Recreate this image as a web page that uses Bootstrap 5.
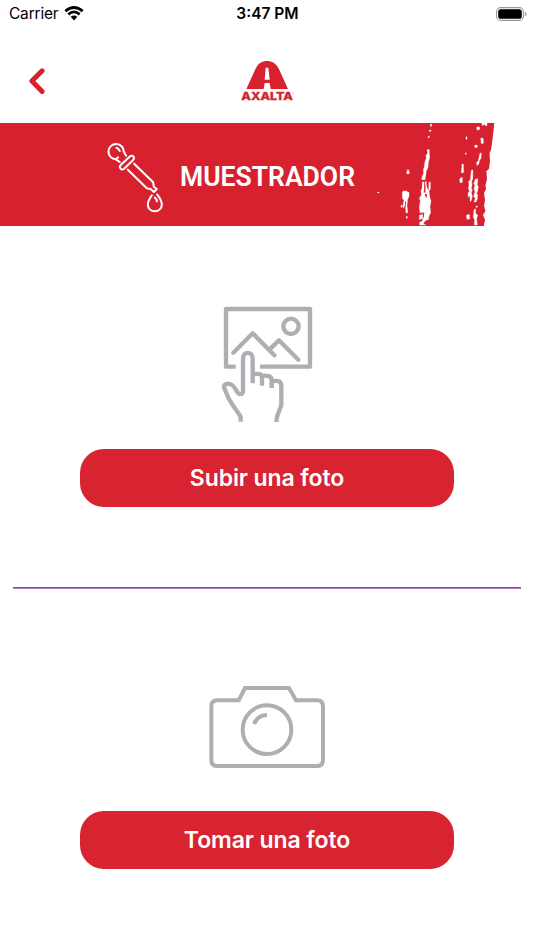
<!DOCTYPE html>
<html lang="es">
<head>
<meta charset="utf-8">
<meta name="viewport" content="width=device-width, initial-scale=1">
<title>Muestrador</title>
<link href="https://cdn.jsdelivr.net/npm/bootstrap@5.3.0/dist/css/bootstrap.min.css" rel="stylesheet">
<style>
body { font-family: Inter, "Liberation Sans", sans-serif; color: #000; }
svg { display: block; flex-shrink: 0; }
.screen { width: 534px; height: 950px; }
.status { height: 28px; padding: 0 7px 0 9px; font-size: 15.5px; line-height: 28px; }
.status > * { flex: 1 1 0; }
.status .carrier { letter-spacing: -.2px; }
.wifi { margin-left: 6px; margin-top: -1px; }
.status .clock { font-weight: 600; margin-left: -1px; }
.topbar { height: 95px; }
.back { width: 74px; padding: 0; border: 0; }
.logo { margin-top: 22px; }
.banner { height: 103px; }
.banner-title { color: #fff; font: 600 28px/34px Roboto, sans-serif; left: 180px; top: 36px; }
.upload { height: 361px; padding-top: 69px; }
.capture { height: 361px; padding-top: 86px; }
.action { width: 374px; height: 58px; border-radius: 24px; background: #d82330; color: #fff; font-weight: 600; font-size: 23px; letter-spacing: -.1px; padding: 0; --bs-btn-hover-bg: #bf1d29; --bs-btn-hover-color: #fff; }
.upload .action { margin-top: 19px; }
.capture .action { margin-top: 31px; }
.divider { height: 2px; margin: 0 13px; background: linear-gradient(#9140bd 50%, #b678d3 50%); }
</style>
</head>
<body class="bg-white">
<main class="screen d-flex flex-column overflow-hidden">
  <div class="status d-flex align-items-center">
    <div class="d-flex align-items-center">
      <span class="carrier">Carrier</span>
      <svg class="wifi" width="20" height="15" viewBox="0 0 18 14" fill="none" stroke="#000" stroke-width="2.5">
        <path d="M.9 4.8Q9-2 17.1 4.8M3.7 7.8Q9 3.3 14.3 7.8"/>
        <path d="M5.9 10.1Q9 7.5 12.1 10.1L9 13.5Z" fill="#000" stroke="none"/>
      </svg>
    </div>
    <div class="clock text-center">3:47 PM</div>
    <div class="d-flex justify-content-end">
      <svg width="31" height="14" viewBox="0 0 31 14">
        <rect x=".6" y=".6" width="26.8" height="12.8" rx="4" fill="#fff" stroke="#999" stroke-width="1.1"/>
        <rect x="2.2" y="2.2" width="23.6" height="9.6" rx="2.6"/>
        <path d="M28.8 4.8Q30.5 5.3 30.5 7T28.8 9.2Z" fill="#999"/>
      </svg>
    </div>
  </div>
  <header class="topbar d-flex justify-content-between">
    <button class="btn back d-flex justify-content-center pt-4" aria-label="Volver">
      <svg class="mt-3" width="16" height="27" viewBox="0 0 16 27" fill="none" stroke="#d7212f" stroke-width="5" stroke-linecap="round" stroke-linejoin="round"><path d="M13.1 2.8 2.9 13 13.1 23.4"/></svg>
    </button>
    <svg class="logo" width="74" height="60" viewBox="0 0 222 180" fill="#d7212f">
      <path fill-rule="evenodd" d="M49 117 76 58C84 39 97 33 111 33S138 39 147 58L174 117H122L119 99H104L101 117ZM107 53 104 89H119L115 53Z"/>
      <text x="34" y="151" font-family="Inter, sans-serif" font-weight="800" font-size="33" stroke="#d7212f" stroke-width="1" textLength="155" lengthAdjust="spacingAndGlyphs">AXALTA</text>
      <circle cx="189" cy="129" r="1.5"/>
    </svg>
    <span class="back"></span>
  </header>
  <section class="banner position-relative">
    <svg width="500" height="103" viewBox="0 0 500 103" aria-hidden="true">
      <path fill="#d7212f" d="M0 0H494.3L493 12 492 20 491 27 489.500 30 490 38 489 46 486.500 48 487 56 485.500 62 486 66 484 70 485 77 484 83 485.500 88 483 92 485 97 484 103H0Z"/>
      <g transform="translate(89.8 2) scale(.33333)" fill="none" stroke="#fff" stroke-width="6" stroke-linecap="round" stroke-linejoin="round">
        <path d="M102 80A23 23 0 1 0 78 103L85 97M78 103 90 111M102 80 109 92M80 68Q87 70 90 78"/>
        <path d="M92 121 121 94Q128 89 132 96 134 101 130 105L102 132Q96 136 92 130 88 126 92 121Z"/>
        <path d="M114 134 171 190 184 193 192 201M133 116 190 172 192 185 201 192 192 201"/>
        <path d="M186 211Q174 227 174 239A21 20 0 0 0 216 239Q216 226 202 208M195 218Q202 223 201 229"/>
      </g>
      <g transform="translate(370 -5) scale(.33333)" fill="#fff" stroke="#fff" stroke-width="1">
        <path d="M181 18h4v7h-4zM178 36h5v4h-5zM174 55h4v4h-4zM171 95H178V106L179 119 175 134 174 149 169 158 167 174 165 185H155L157 174 161 166 160 155 163 146 165 130 169 121 168 112 173 106Z"/>
        <path d="M157 192H162V210L161 224H167V206L165 191H169V204L176 220 177 192H181V214L177 218 179 237 183 250 180 266 182 284 177 294 176 304 164 309 160 318 168 321H149V313L157 309 159 300 148 305V292L159 289 158 282 150 285 148 268 151 250 148 241 154 232 153 216 156 213Z"/>
        <path fill="#d7212f" stroke="none" d="M164 228h6l1 10h-4zM159 284h4l-2 15h-3z"/>
        <path d="M112 155h4v5h2v7h-8v-6h2zM97 222 102 218 106 220 110 218 112 222 117 223V235L113 244 111 263 113 278 112 285H108L107 270 109 252 105 248V261L101 270 98 267 102 247 97 241ZM93 262h3v6h-3zM109 295h3v6h-3zM23 222h4v3h-4z"/>
        <path d="M335 14H351V23H346L343 18 337 23ZM320 28 328 26 330 34 321 36ZM332 61 339 60 341 75 334 77ZM288 56h3v8h-3zM314 82 321 81 323 87 315 89ZM330 105 334 106 333 121 328 128 327 137 321 143 320 133 325 128ZM286 105h3v4h-3zM276 138 280 138 281 164H274L275 153ZM269 182 277 178 277 193 270 194ZM304 157 309 156 308 184 305 190 306 200 304 211 307 216 304 224 307 235 303 250 300 249V233L295 238 294 225 299 219 295 212 297 201 296 189 301 187ZM316 184 323 182 323 195 321 198 325 207 322 223 318 225 323 230 322 243 318 252H312L316 241 311 235 315 222 312 211 315 202 311 197ZM318 264h4v4h-4zM289 292 298 289 299 303 291 304ZM312 275 317 272 317 286 323 292 320 302 322 321H313L314 306 310 298ZM343 315h6v5h-6z"/>
      </g>
    </svg>
    <h1 class="banner-title position-absolute m-0">
      <svg width="200" height="34" viewBox="0 0 200 34"><text x="0" y="26.5" fill="#fff" textLength="175" lengthAdjust="spacingAndGlyphs">MUESTRADOR</text></svg>
    </h1>
  </section>
  <section class="upload d-flex flex-column align-items-center">
    <svg width="115" height="135" viewBox="0 0 345 405" fill="none" stroke="#aeafb3" stroke-width="13" stroke-linejoin="round" aria-hidden="true">
      <path d="M77 215H48V42H300V215H150"/>
      <circle cx="243" cy="94" r="23"/>
      <path stroke-linecap="round" d="M70 173 128 115 193 181M181 161 207 136 265 194"/>
      <path d="M92 380V365C76 340 58 320 51 299L42 277C41 268 50 265 60 267 69 269 74 278 80 288 85 300 99 301 99 289V191C99 168 128 168 128 191V265M134 237C147 236 156 237 156 248V272M156 243C172 240 185 243 185 255V279M185 259C203 255 214 258 214 273V327C214 344 199 353 199 381"/>
    </svg>
    <button class="btn action">Subir una foto</button>
  </section>
  <div class="divider"></div>
  <section class="capture d-flex flex-column align-items-center">
    <svg width="135" height="105" viewBox="0 0 405 315" fill="none" stroke="#aeafb3" stroke-width="12" aria-hidden="true">
      <path d="M135 39H267L288 76H351Q369 76 369 94V255Q369 273 351 273H52Q34 273 34 255V94Q34 76 52 76H116Z"/>
      <circle cx="201" cy="164" r="73"/>
      <path d="M201 120Q173 121 162 147"/>
    </svg>
    <button class="btn action">Tomar una foto</button>
  </section>
</main>
<script src="https://cdn.jsdelivr.net/npm/bootstrap@5.3.0/dist/js/bootstrap.bundle.min.js"></script>
</body>
</html>
